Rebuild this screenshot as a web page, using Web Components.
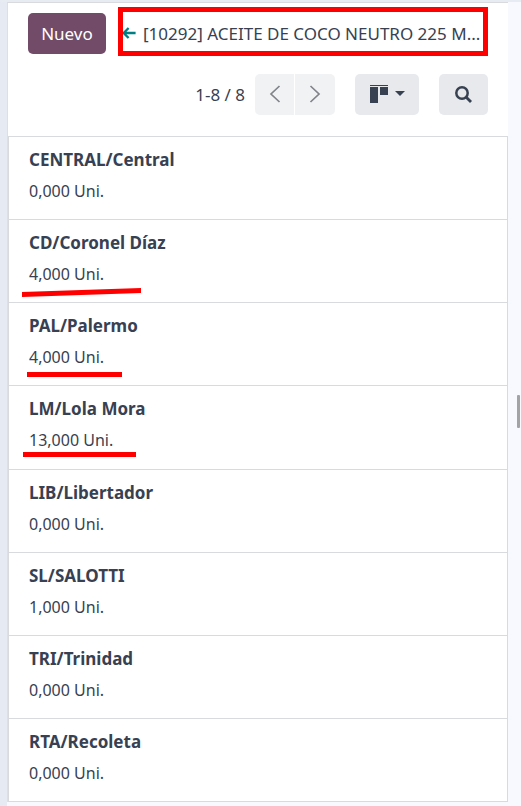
<!DOCTYPE html>
<html lang="es">
<head>
<meta charset="utf-8">
<meta name="viewport" content="width=device-width, initial-scale=1">
<title>Inventario</title>
<style>
html, body { margin: 0; }
body { background: #f8f9fe; color: #374151; font: 16px/24px "Noto Sans", "Open Sans", sans-serif; }
</style>
</head>
<body>
<stock-page>
  <stock-toolbar slot="header"></stock-toolbar>
  <stock-record name="CENTRAL/Central">0,000 Uni.</stock-record>
  <stock-record name="CD/Coronel Díaz">4,000 Uni.<mark-line slot="mark" kind="slanted"></mark-line></stock-record>
  <stock-record name="PAL/Palermo">4,000 Uni.<mark-line slot="mark" kind="short"></mark-line></stock-record>
  <stock-record name="LM/Lola Mora">13,000 Uni.<mark-line slot="mark" kind="long"></mark-line></stock-record>
  <stock-record name="LIB/Libertador">0,000 Uni.</stock-record>
  <stock-record name="SL/SALOTTI">1,000 Uni.</stock-record>
  <stock-record name="TRI/Trinidad">0,000 Uni.</stock-record>
  <stock-record name="RTA/Recoleta">0,000 Uni.</stock-record>
</stock-page>
<script>
class BaseElement extends HTMLElement {
  constructor() {
    super();
    this.attachShadow({ mode: "open" }).innerHTML = this.constructor.markup;
  }
}

customElements.define("stock-page", class extends BaseElement {
  static markup = `
    <style>
      :host { display: flex; min-height: 100vh; box-sizing: border-box; position: relative;
        border-top: 2px solid #e7ecf2; }
      .edge { flex: 0 0 7px; background: #e6ebf3; }
      main { flex: 1; min-width: 0; display: flex; flex-direction: column; background: #fff;
        border-top: 1px solid #d8dadd; border-left: 1px solid #dcdfe4;
        margin: 0 13px 4px 0; }
      .list { flex: 1; display: flex; flex-direction: column; border: 1px solid #d8dadd; border-bottom: 0; }
      .thumb { position: absolute; right: 1px; top: 393px; width: 3px; height: 33px; background: #a3a3a3; border-radius: 1px; }
    </style>
    <div class="edge"></div>
    <main>
      <slot name="header"></slot>
      <div class="list"><slot></slot></div>
    </main>
    <div class="thumb"></div>`;
});

customElements.define("stock-toolbar", class extends BaseElement {
  static markup = `
    <style>
      :host { display: flex; flex-direction: column; gap: 20px; padding: 10px 20px 21px; font-size: 17px; }
      .row { display: flex; align-items: center; }
      .top { gap: 16px; }
      .tools { justify-content: flex-end; }
      button { font: inherit; height: 41px; border: 0; margin: 0; padding: 0; color: #374151;
        display: flex; align-items: center; justify-content: center; border-radius: 5px; background: #e7e9ed; }
      .new { flex: none; width: 78px; background: #714b67; color: #fff; }
      .crumb { position: relative; flex: 1; min-width: 0; display: flex; align-items: center; gap: 7px; color: #374151; text-decoration: none; }
      .crumb svg { flex: none; }
      .crumb span { overflow: hidden; white-space: nowrap; }
      .frame { position: absolute; inset: -15px 0 -10px -4px; border: 5px solid #f00; }
      .pager { display: flex; gap: 1px; margin: 0 20px 0 10px; }
      .pager button { width: 40px; background: #f1f2f4; }
      .pager button:first-child { width: 39px; border-radius: 5px 0 0 5px; }
      .pager button:last-child { border-radius: 0 5px 5px 0; }
      .view { width: 64px; gap: 7px; margin-right: 20px; }
      .search { width: 49px; }
    </style>
    <div class="row top">
      <button class="new" type="button">Nuevo</button>
      <a class="crumb" href="#">
        <svg width="14" height="14" viewBox="0 0 14 14" fill="none" stroke="#017e84" stroke-width="2.4"><path d="M13.6 6H2M6.6 1L1.6 6l5 5"/></svg>
        <span>[10292] ACEITE DE COCO NEUTRO 225 M...</span>
        <i class="frame"></i>
      </a>
    </div>
    <div class="row tools">
      <span>1-8 / 8</span>
      <div class="pager">
        <button type="button" aria-label="Anterior"><svg width="12" height="20" viewBox="0 0 12 20" fill="none" stroke="#80838a" stroke-width="1.7"><path d="M10.5 1L2 9l8.500 8"/></svg></button>
        <button type="button" aria-label="Siguiente"><svg width="12" height="20" viewBox="0 0 12 20" fill="none" stroke="#80838a" stroke-width="1.7"><path d="M1.500 1L10 9l-8.500 8"/></svg></button>
      </div>
      <button class="view" type="button" aria-label="Vista kanban">
        <svg width="18" height="20" viewBox="0 0 18 20" fill="#374151"><path d="M0 0h18v1H0zM0 2h8v16H0zM10 2h8v8h-8z"/></svg>
        <svg width="10" height="7" viewBox="0 0 10 7" fill="#374151"><path d="M0 0h10L5 5z"/></svg>
      </button>
      <button class="search" type="button" aria-label="Buscar"><svg width="17" height="17" viewBox="0 0 17 17" fill="none" stroke="#374151"><circle cx="7" cy="7" r="5.700" stroke-width="2.500"/><path d="M11 11l5 5" stroke-width="2.800"/></svg></button>
    </div>`;
});

customElements.define("stock-record", class extends BaseElement {
  static markup = `
    <style>
      :host { display: block; flex: 1; box-sizing: border-box; position: relative;
        padding: 11px 20px 16px; border-bottom: 1px solid #d8dadd; }
      b { display: block; margin-bottom: 7px; font-size: 17px; }
    </style>
    <b></b><div><slot></slot></div><slot name="mark"></slot>`;
  connectedCallback() {
    this.shadowRoot.querySelector("b").textContent = this.getAttribute("name");
  }
});

customElements.define("mark-line", class extends BaseElement {
  static markup = `
    <style>
      :host { position: absolute; left: 12px; top: 66px; color: #f00; }
      :host([kind="short"]) { left: 17px; }
      :host([kind="long"]) { left: 13px; }
      svg { display: none; }
      :host([kind="slanted"]) .slanted, :host([kind="short"]) .short, :host([kind="long"]) .long { display: block; }
    </style>
    <svg class="slanted" width="120" height="12" viewBox="0 0 120 12" fill="currentColor"><path d="M1 6L120 2v5L1 11z"/></svg>
    <svg class="short" width="96" height="12" viewBox="0 0 96 12" fill="currentColor"><path d="M1 3h95v5H1z"/></svg>
    <svg class="long" width="114" height="12" viewBox="0 0 114 12" fill="currentColor"><path d="M1 0h113v5H1z"/></svg>`;
});
</script>
</body>
</html>
